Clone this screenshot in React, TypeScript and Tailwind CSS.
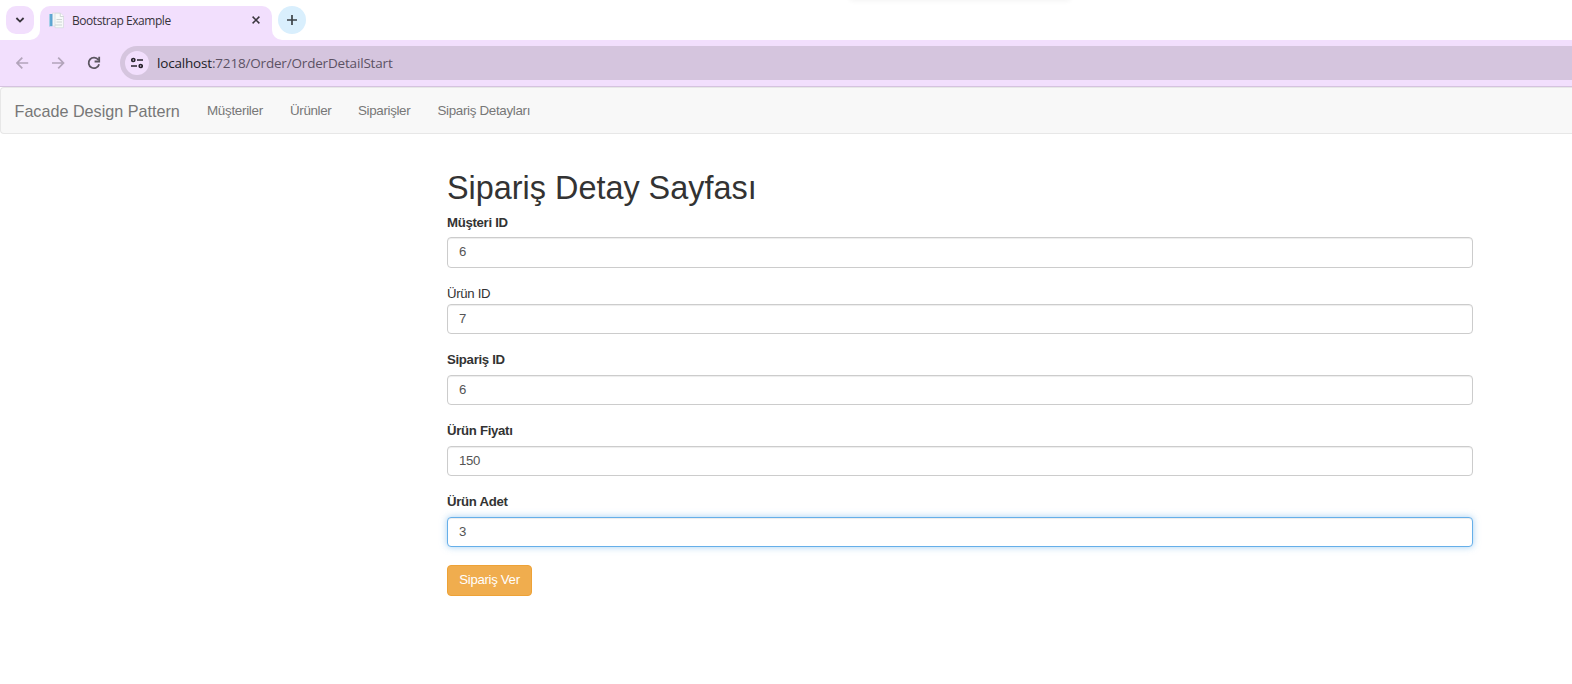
import { useState } from "react";

const navLinks = [
  { label: "Müşteriler", box: "ml-[27px] w-[56px] tracking-[-0.29px]" },
  { label: "Ürünler", box: "ml-[27px] w-[41px] tracking-[-0.35px]" },
  { label: "Siparişler", box: "ml-[27px] w-[53px] tracking-[-0.35px]" },
  { label: "Sipariş Detayları", box: "ml-[26.5px] w-[93px] tracking-[-0.33px]" },
];

const fields = [
  { id: "musteri", label: "Müşteri ID", value: "6", gap: "h-[23px]", size: "h-[31px] mb-[17px] pb-[2px]", bold: true },
  { id: "urun", label: "Ürün ID", value: "7", gap: "h-[19px]", size: "h-[30px] mb-[17px] pb-px", bold: false },
  { id: "siparis", label: "Sipariş ID", value: "6", gap: "h-[24px]", size: "h-[30px] mb-[17px] pb-px", bold: true },
  { id: "fiyat", label: "Ürün Fiyatı", value: "150", gap: "h-[24px]", size: "h-[30px] mb-[17px] pb-px", bold: true },
  { id: "adet", label: "Ürün Adet", value: "3", gap: "h-[24px]", size: "h-[30px] mb-[18px] pb-px", bold: true },
];

function TabStrip() {
  return (
    <div className="relative flex h-10 bg-white">
      <div className="relative w-10 overflow-hidden bg-[#f2dffd]">
        <div className="absolute inset-0 rounded-br-[10px] bg-white" />
        <button className="absolute left-[6px] top-[6px] flex h-7 w-7 items-center justify-center rounded-[10px] bg-[#f2dffd]" aria-label="Sekme ara">
          <svg width="10" height="6" viewBox="0 0 10 6" fill="none" stroke="#38343c" strokeWidth="1.8">
            <path d="M1.4 1 5 4.6 8.6 1" />
          </svg>
        </button>
      </div>
      <div className="mt-[6px] flex h-[34px] w-[232px] items-center rounded-t-[10px] bg-[#f2dffd] pb-[6px] pl-[8px]">
        <svg width="17" height="17" viewBox="0 0 17 17">
          <path d="M4.5 1h7.5v13H4.5z" fill="#f1f6f7" stroke="#d6dcde" strokeWidth=".6" />
          <path d="M1 2h3.4v12.2H1z" fill="#5aa5d2" />
          <path d="M1 2h1.1v12.2H1z" fill="#a5cfe8" />
          <path d="M7 1.3h5.5L15.500 4v11.700H7z" fill="#f7faf9" stroke="#cfd6d6" strokeWidth=".6" />
          <path d="M12.300 1.300V4.500h3.200" fill="#fff" stroke="#c2caca" strokeWidth=".7" />
          <path d="M8.500 7.500h5.500M8.500 10h5.500M7 13h7" stroke="#cdd5d4" />
        </svg>
        <span className="ml-[7px] mt-[2px] w-[100px] whitespace-nowrap font-['Open_Sans',sans-serif] text-[12px] leading-4 tracking-[-0.45px] text-[#37333b]">Bootstrap Example</span>
        <svg className="ml-[79px]" width="10" height="10" viewBox="0 0 10 10" stroke="#3a363e" strokeWidth="1.5">
          <path d="m1.6 1.6 6.8 6.8M8.4 1.6 1.6 8.4" />
        </svg>
      </div>
      <div className="relative flex-1 bg-[#f2dffd]">
        <div className="absolute inset-0 rounded-bl-[10px] bg-white" />
        <button className="absolute left-[6px] top-[6px] flex h-7 w-7 items-center justify-center rounded-full bg-[#d9effd]" aria-label="Yeni sekme">
          <svg width="10" height="10" viewBox="0 0 10 10" stroke="#3b4247" strokeWidth="1.7">
            <path d="M5 0v10M0 5h10" />
          </svg>
        </button>
      </div>
      <div className="absolute left-[850px] top-[-5px] h-[5px] w-[220px] shadow-[0_1px_5px_rgba(0,0,0,0.05)]" />
    </div>
  );
}

function AddressBar() {
  return (
    <div className="flex h-[47px] items-start border-b border-[#d5c3df] bg-[#f2dffd] pt-[6px]">
      <svg className="ml-[16px] mt-[11px]" width="13" height="12" viewBox="0 0 13 12" fill="none" stroke="#b2a4ba" strokeWidth="1.7">
        <path d="M12.2 6H1.3M6.3.7 1 6l5.3 5.3" />
      </svg>
      <svg className="ml-[23px] mt-[11px]" width="13" height="12" viewBox="0 0 13 12" fill="none" stroke="#b2a4ba" strokeWidth="1.7">
        <path d="M0 6h11.2M6.2.7 11.5 6l-5.3 5.3" />
      </svg>
      <svg className="ml-[22px] mt-[10px]" width="14" height="14" viewBox="0 0 14 14" fill="none" stroke="#5c5661" strokeWidth="1.8">
        <path d="M11.3 3.8A5.3 5.3 0 1 0 12.1 8.2M12.2.8v4.7H7.6" />
      </svg>
      <div className="ml-[19px] flex h-[34px] flex-1 items-center rounded-l-full bg-[#d5c5de] pl-[5px]">
        <div className="flex h-6 w-6 items-center justify-center rounded-full bg-[#f2dffd]">
          <svg width="12" height="12" viewBox="0 0 12 12" fill="none" stroke="#29252e" strokeWidth="1.7">
            <circle cx="2.3" cy="3" r="1.5" />
            <path d="M6 3h6M0 9h6" />
            <circle cx="9.7" cy="9" r="1.5" />
          </svg>
        </div>
        <span className="ml-[8px] whitespace-nowrap font-['Open_Sans',sans-serif] text-[13.5px] leading-5 tracking-[-0.18px] text-[#5c5264]">
          <span className="text-[#211d27]">localhost</span>:7218/Order/OrderDetailStart
        </span>
      </div>
    </div>
  );
}

export default function App() {
  const [values, setValues] = useState<string[]>(fields.map((f) => f.value));
  return (
    <div className="h-[684px] w-[1572px] overflow-hidden bg-white font-['Liberation_Sans',Arial,sans-serif] text-[13.2px] leading-[18px] tracking-[-0.3px] text-[#333]">
      <TabStrip />
      <AddressBar />
      <nav className="flex h-[47px] items-center rounded-l-[4px] border border-r-0 border-[#e7e7e7] bg-[#f8f8f8] pl-[13.5px] text-[#777]">
        <a className="w-[165.5px] whitespace-nowrap text-[16.2px] tracking-[-0.01px]">Facade Design Pattern</a>
        {navLinks.map((link) => (
          <a key={link.label} className={`${link.box} whitespace-nowrap text-[13.4px]`}>{link.label}</a>
        ))}
      </nav>
      <main className="ml-[447px] w-[1026px] pt-[35px]">
        <h1 className="mb-[9px] h-[36px] whitespace-nowrap text-[32.4px] leading-[38px] tracking-normal">Sipariş Detay Sayfası</h1>
        <form>
          {fields.map((field, i) => (
            <div key={field.id}>
              <label htmlFor={field.id} className={`block ${field.gap} ${field.bold ? "font-bold" : ""}`}>{field.label}</label>
              <input
                id={field.id}
                value={values[i]}
                onChange={(e) => setValues(values.map((v, n) => (n === i ? e.target.value : v)))}
                className={`block w-full rounded-[4px] border bg-white px-[11px] text-[#555] outline-none ${field.size} ${
                  field.id === "adet"
                    ? "border-[#66afe9] shadow-[inset_0_1px_1px_rgba(0,0,0,0.075),0_0_7px_rgba(102,175,233,0.6)]"
                    : "border-[#ccc] shadow-[inset_0_1px_1px_rgba(0,0,0,0.075)]"
                }`}
              />
            </div>
          ))}
          <button type="button" className="flex h-[31px] w-[85px] items-center justify-center whitespace-nowrap rounded-[4px] border border-[#eea236] bg-[#f0ad4e] pb-px text-white">Sipariş Ver</button>
        </form>
      </main>
    </div>
  );
}
